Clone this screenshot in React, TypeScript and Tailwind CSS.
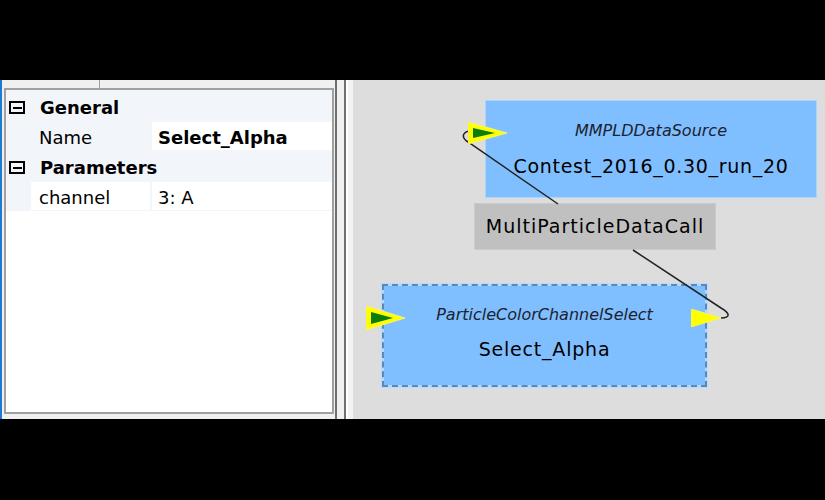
import React from 'react';

const gridFont = "font-['DejaVu_Sans',sans-serif]";
const nodeFont = "font-['DejaVu_Sans',sans-serif]";

type SlotProps = { left: number; top: number; w: number; h: number; green?: boolean };

// yellow call slot, green inner arrow when it is an input
const Slot = ({ left, top, w, h, green = true }: SlotProps) => (
  <svg
    className="absolute"
    style={{ left, top }}
    width={w}
    height={h}
    viewBox={`0 0 ${w} ${h}`}
  >
    <polygon points={`0,0 0,${h} ${w},${h / 2}`} fill="#ffff00" stroke="#f4f46a" strokeWidth="1" />
    {green && <polygon points={`5,6 5,${h - 6} ${w - 12},${h / 2}`} fill="#0a7d0a" />}
  </svg>
);

const MinusBox = () => (
  <div className="w-[16px] h-[13px] border-2 border-black flex items-center justify-center">
    <div className="w-[9px] h-[2px] bg-black" />
  </div>
);

const Category = ({ label }: { label: string }) => (
  <div className="h-[30px] bg-[#f2f5fa] flex items-center pt-[3px]">
    <div className="ml-[3px] mr-[15px]">
      <MinusBox />
    </div>
    <span className={`${gridFont} text-[18px] font-bold text-black`}>{label}</span>
  </div>
);

const Property = ({ name, value, bold = false, selected = false }: { name: string; value: string; bold?: boolean; selected?: boolean }) => (
  <div className="h-[30px] bg-[#f2f5fa] flex py-[1px]">
    <div className="w-[25px]" />
    <div className={`w-[119px] flex items-center pl-[8px] pt-[3px] ${selected ? '' : 'bg-white'}`}>
      <span className={`${gridFont} text-[18px] text-black`}>{name}</span>
    </div>
    <div className="w-[2px]" />
    <div className="flex-1 bg-white flex items-center pl-[6px] pt-[3px]">
      <span className={`${gridFont} text-[18px] text-black ${bold ? 'font-bold' : ''}`}>{value}</span>
    </div>
  </div>
);

export default function App() {
  return (
    <div className="w-[825px] h-[500px] bg-black flex flex-col">
      <div className="h-[80px]" />
      <div className="h-[339px] flex">
        {/* property grid panel */}
        <div className="w-[2px] bg-[#1e7ad4]" />
        <div className="w-[333px] bg-[#f0f0f0] flex flex-col pl-[2px] pr-[1px]">
          <div className="h-[8px] relative">
            <div className="absolute left-[95px] top-0 h-full w-[1px] bg-[#a0a0a0]" />
          </div>
          <div className="h-[326px] border-2 border-[#a0a0a0] bg-white">
            <div className="h-[1px] bg-[#f2f5fa]" />
            <Category label="General" />
            <Property name="Name" value="Select_Alpha" bold selected />
            <Category label="Parameters" />
            <Property name="channel" value="3: A" />
          </div>
        </div>

        {/* splitter */}
        <div className="w-[2px] bg-[#6f6f6f]" />
        <div className="w-[7px] bg-[#f0f0f0]" />
        <div className="w-[2px] bg-[#6f6f6f]" />
        <div className="w-[2px] bg-white" />
        <div className="w-[5px] bg-[#f2f2f2]" />

        {/* module graph canvas */}
        <div className="flex-1 bg-[#dddddd] relative overflow-hidden">
          <div className="absolute left-[132px] top-[20px] w-[332px] h-[98px] bg-[#80bfff] border border-[#a8d4ff] flex flex-col items-center pt-[20px] gap-[13px]">
            <div className={`${nodeFont} italic text-[16px] leading-[20px] text-[#1c2230]`}>MMPLDDataSource</div>
            <div className={`${nodeFont} text-[19px] leading-[24px] tracking-[0.7px] text-black`}>Contest_2016_0.30_run_20</div>
          </div>

          <div className="absolute left-[121px] top-[123px] w-[242px] h-[47px] bg-[#c0c0c0] border border-[#cbcbcb] flex items-center justify-center">
            <span className={`${nodeFont} text-[19px] tracking-[1px] text-black`}>MultiParticleDataCall</span>
          </div>

          <div className="absolute left-[29px] top-[204px] w-[325px] h-[103px] bg-[#b3d9ff] outline outline-1 outline-[#b8dcff]">
            <div className="w-full h-full border-2 border-dashed border-[#5b88b9] bg-[#80bfff] bg-clip-padding flex flex-col items-center pt-[19px] gap-[12px]">
              <div className={`${nodeFont} italic text-[16px] leading-[20px] text-[#1c2230]`}>ParticleColorChannelSelect</div>
              <div className={`${nodeFont} text-[19px] leading-[24px] tracking-[0.8px] text-black`}>Select_Alpha</div>
            </div>
          </div>

          <svg className="absolute inset-0" width="472" height="339">
            <path d="M 120 51 C 110 50, 107 57, 115 62 L 205 124" fill="none" stroke="#222" strokeWidth="1.5" />
            <path d="M 280 170 L 368 228 C 377 233, 378 238, 368 238" fill="none" stroke="#222" strokeWidth="1.5" />
          </svg>

          <Slot left={115} top={42} w={39} h={22} />
          <Slot left={13} top={226} w={39} h={24} />
          <Slot left={338} top={229} w={30} h={18} green={false} />
        </div>
      </div>
    </div>
  );
}
